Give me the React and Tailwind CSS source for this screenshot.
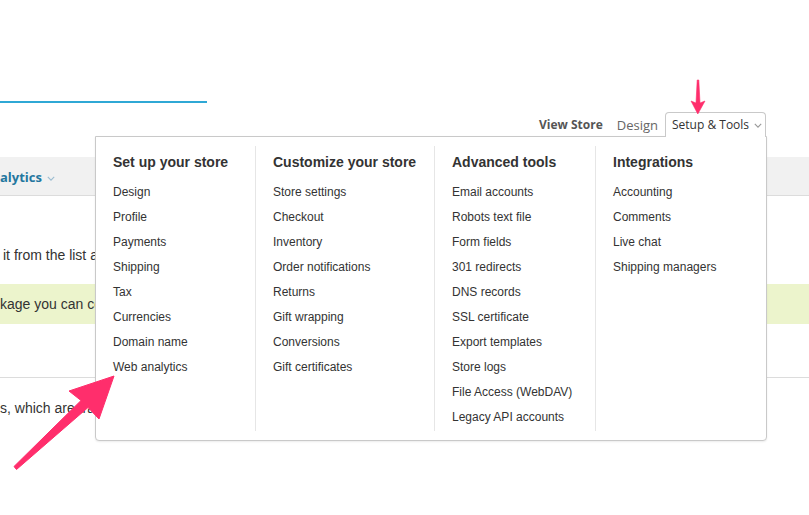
const sans = { fontFamily: '"Liberation Sans", Arial, sans-serif' }

const columns = [
  {
    title: 'Set up your store',
    width: 'w-[160px]',
    items: ['Design', 'Profile', 'Payments', 'Shipping', 'Tax', 'Currencies', 'Domain name', 'Web analytics'],
  },
  {
    title: 'Customize your store',
    width: 'w-[179px]',
    items: ['Store settings', 'Checkout', 'Inventory', 'Order notifications', 'Returns', 'Gift wrapping', 'Conversions', 'Gift certificates'],
  },
  {
    title: 'Advanced tools',
    width: 'w-[161px]',
    items: [
      'Email accounts',
      'Robots text file',
      'Form fields',
      '301 redirects',
      'DNS records',
      'SSL certificate',
      'Export templates',
      'Store logs',
      'File Access (WebDAV)',
      'Legacy API accounts',
    ],
  },
  {
    title: 'Integrations',
    width: 'flex-1',
    items: ['Accounting', 'Comments', 'Live chat', 'Shipping managers'],
  },
]

function Chevron({ className }) {
  return (
    <svg viewBox="0 0 10 6" className={className} fill="none" stroke="currentColor" strokeWidth="1.4">
      <path d="M1 1l4 4 4-4" />
    </svg>
  )
}

function MenuColumn({ col, last }) {
  return (
    <div className={`${col.width} ${last ? '' : 'border-r border-[#e6e6e6]'} pl-[17px]`}>
      <div className="pt-[6px] mb-[8px] text-[14px] leading-[20px] font-bold text-[#333]">{col.title}</div>
      <ul>
        {col.items.map((item) => (
          <li key={item} className="h-[25px] leading-[25px] text-[12px] text-[#333] whitespace-nowrap">
            {item}
          </li>
        ))}
      </ul>
    </div>
  )
}

export default function App() {
  return (
    <div className="relative w-[809px] h-[515px] overflow-hidden bg-white" style={sans}>
      {/* page behind the menu */}
      <div className="h-[101px]" />
      <div className="h-[2px] w-[207px] bg-[#2fa8d5]" />

      <nav
        className="mt-[9px] h-[24px] flex items-start justify-end pr-[43px] whitespace-nowrap"
        style={{ fontFamily: '"Open Sans", sans-serif' }}
      >
        <span className="leading-[26px] text-[12px] font-bold text-[#555] mr-[14px]">View Store</span>
        <span className="leading-[26px] text-[13px] text-[#666] mr-[7px]">Design</span>
        <div className="relative z-20 h-[25px] w-[101px] flex items-center pl-[6px] gap-[5px] bg-white border border-b-0 border-[#c9c9c9] rounded-t-[4px] text-[12px] text-[#333]">
          <span className="leading-[24px]">Setup &amp; Tools</span>
          <Chevron className="w-[8px] h-[5px] text-[#999]" />
        </div>
      </nav>

      <div className="mt-[21px] h-[39px] bg-[#f1f1f1] border-b border-[#dcdcdc] flex items-center">
        <span
          className="mt-[3px] text-[13px] font-bold text-[#24779f] leading-none"
          style={{ fontFamily: '"Open Sans", sans-serif' }}
        >
          alytics
        </span>
        <Chevron className="ml-[5px] mt-[5px] w-[8px] h-[5px] text-[#9bbcd0]" />
      </div>

      <p className="mt-[49px] pl-[3px] text-[14px] leading-[20px] text-[#333] whitespace-nowrap">
        it from the list and click the button to add it to your store.
      </p>

      <div className="mt-[19px] h-[40px] bg-[#ecf4cc] flex items-center text-[14px] text-[#333] whitespace-nowrap">
        kage you can connect your store to the analytics service of your choice.
      </div>

      <div className="mt-[53px] h-px bg-[#dcdcdc]" />

      <p className="mt-[20px] text-[14px] leading-[20px] text-[#333] whitespace-nowrap">
        s, which are tracked for every order placed in your store.
      </p>

      {/* dropdown menu */}
      <div className="absolute left-[95px] top-[136px] z-10 w-[672px] h-[305px] bg-white border border-[#c9c9c9] rounded-b-[4px] shadow-[0_1px_2px_rgba(0,0,0,0.08)] flex py-[9px]">
        {columns.map((col, i) => (
          <MenuColumn key={col.title} col={col} last={i === columns.length - 1} />
        ))}
      </div>

      {/* annotation arrows */}
      <svg className="absolute inset-0 z-30 pointer-events-none" width="809" height="515" viewBox="0 0 809 515">
        <polygon
          points="697.2,80 698.8,80 700,103 705,101 697.8,114 691,101 696,103"
          fill="#ff2e6c"
          stroke="#ff2e6c"
          strokeWidth="0.6"
          strokeLinejoin="round"
        />
        <polygon
          points="14,466.5 81,400.5 69,391 114,376 99,419 88,407.5 16.5,469.5"
          fill="#ff2e6c"
          stroke="#ff2e6c"
          strokeWidth="1"
          strokeLinejoin="round"
        />
      </svg>
    </div>
  )
}
